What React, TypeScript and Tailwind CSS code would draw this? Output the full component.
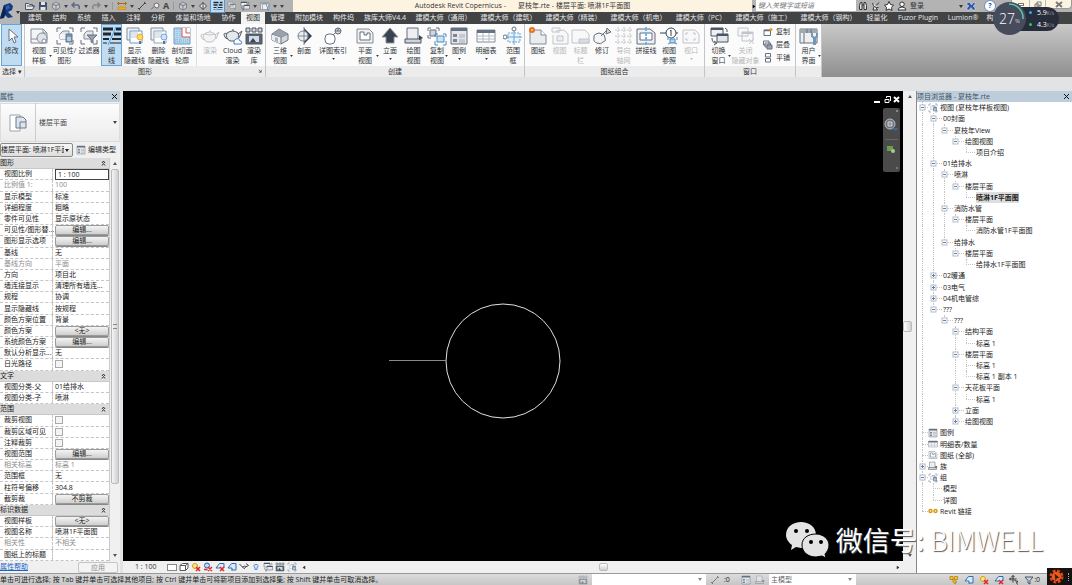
import type { ReactNode } from "react";
import { clsx } from "clsx";

const INK = "#667080";
const BLUE = "#4d8bbf";

const glyphs: Record<string, ReactNode> = {
  cursor: <path d="M7 3v12l3-3 2 5 2-1-2-5h4z" fill="#fff" stroke={INK} />,
  template: (
    <>
      <path d="M2 3h12l4 4v10H2z" fill="#f3f5f7" stroke="#858d98" />
      <path d="M2 13h8M14 3v4h4" fill="none" stroke="#858d98" />
      <circle cx="13" cy="12" r="5" fill="#dfe3e8" stroke="#858d98" />
      <circle cx="15" cy="15" r="2" fill="#fff" stroke="#858d98" />
    </>
  ),
  visibility: (
    <>
      <path d="M2 6V2h4M14 2h4v4M2 14v4h4M18 14v4h-4" fill="none" stroke={INK} />
      <path d="M5 8l3-3h6v8H5z" fill="#e5e7eb" stroke="#858d98" />
      <path d="M5 8h6v5H5z" fill="#f3f4f6" />
      <path d="M11 8h6v8h-6z" fill="#6f9cc4" stroke={INK} />
      <path d="M12 12h4M12 14h4" stroke="#fff" />
    </>
  ),
  filter: (
    <>
      <path d="M2 6V2h4M14 2h4v4M2 14v4h4M18 14v4h-4" fill="none" stroke={INK} />
      <path d="M5 8l3-3h6v8H5z" fill="#e5e7eb" stroke="#858d98" />
      <path d="M8 9h10l-4 4v4l-2-1v-3z" fill="#9ca3af" stroke={INK} />
    </>
  ),
  thin: (
    <>
      <path d="M1 3h10M14 3h5M1 8h8M12 8h7" stroke="#20262e" strokeWidth="3" />
      <path d="M1 13h6M10 13h9" stroke="#20262e" strokeWidth="2" />
      <path d="M1 17h4M8 17h11" stroke="#20262e" />
      <path d="M14 1L6 19" stroke="#3fa0e8" />
    </>
  ),
  showHidden: (
    <>
      <path d="M2 2h12v12H2z" fill="#eef2f5" stroke="#858d98" />
      <path d="M5 5h12v12H5z" fill="#fff" stroke="#6b9cc8" />
      <path d="M6 6h7v6H6z" fill="#dfe5ea" />
      <circle cx="15" cy="11" r="3" fill="#ffd75e" stroke="#e0b040" />
      <path d="M14 15h2v3h-2z" fill={INK} />
    </>
  ),
  removeHidden: (
    <>
      <path d="M2 2h12v12H2z" fill="#eef2f5" stroke="#858d98" />
      <path d="M5 5h12v12H5z" fill="#fff" stroke="#8ca8c2" />
      <path d="M6 6h7v6H6z" fill="#dfe5ea" />
      <circle cx="15" cy="11" r="3" fill="#cfe3fb" stroke="#7aa3d6" />
      <path d="M14 15h2v3h-2z" fill={INK} />
    </>
  ),
  cutProfile: (
    <>
      <path d="M2 2h16v16H2z" fill="#b9d9ef" stroke="#6a9cc0" />
      <path d="M10 2h8v9h-8z" fill="#fff" />
      <path d="M10 2v9h8M14 2v5h4" fill="none" stroke="#d9534f" />
      <path d="M3 14h14M3 16h14M5 3v14M8 3v14" stroke="#7fb2d6" strokeDasharray="1 1" />
    </>
  ),
  teapot: (
    <>
      <path d="M4 8q6-4 11 0q2 5-3 8H7q-5-3-3-8zM9 5h2M4 9Q1 7 1 10q1 4 4 4M15 9l4-3-3 7" fill="#e5e7eb" stroke="#555e6a" />
      <path d="M5 8q5 2 10 0" fill="none" stroke="#555e6a" />
    </>
  ),
  cloudTeapot: (
    <>
      <path d="M4 7q6-4 11 0q2 5-3 8H7q-5-3-3-8zM9 4h2M4 8Q1 6 1 9q1 4 4 4M15 8l4-3-3 7" fill="#e5e7eb" stroke="#555e6a" />
      <path d="M11 18h7q2-3-1-3-1-4-4-2-3 1-2 5z" fill="#fff" stroke="#3f80c8" />
    </>
  ),
  gallery: (
    <>
      <path d="M2 2h4v4H2zM8 2h4v4H8zM14 2h4v4h-4z" fill="#d1d5db" stroke="#4b5563" />
      <path d="M2 8h16v10H2z" fill="#5b6470" stroke="#4b5563" />
      <path d="M5 10h10v6H5z" fill="#cfdbe6" />
      <path d="M6 16l3-4 3 4z" fill="#39424e" />
    </>
  ),
  house: (
    <>
      <path d="M2 8l7-5 9 5v6l-7 4-9-4z" fill="#d3d7dc" stroke={INK} />
      <path d="M2 8l9 3v7l-9-4z" fill="#eceef1" />
      <path d="M2 8l9 3 7-3M11 11v7" fill="none" stroke={INK} />
      <path d="M2 8l7-5 9 5-7 3z" fill="#98a1ac" />
      <path d="M5 11l3 1v4l-3-1z" fill="#a9b1ba" />
    </>
  ),
  section: (
    <>
      <path d="M10 2l8 8-8 8z" fill="#39424e" />
      <circle cx="9" cy="10" r="5" fill="#eef1f4" stroke="#7b8490" />
      <path d="M10 1v18M4 10h10" stroke="#7b8490" />
    </>
  ),
  callout: (
    <>
      <rect x="2" y="8" width="10" height="10" rx="4" fill="#fff" stroke={INK} />
      <circle cx="15" cy="5" r="3" fill="#d1d5db" stroke={INK} />
      <path d="M10 9l3-3M12 5h6M15 2v3" stroke={INK} />
    </>
  ),
  plan: (
    <>
      <path d="M2 3h12l4 4v10H2z" fill="#eef0f3" stroke="#858d98" />
      <path d="M5 6h4v3h3V7h3v7H5z" fill="#fff" stroke={INK} />
    </>
  ),
  elevation: <path d="M10 2l8 9h-4v6H6v-6H2z" fill="#39424e" stroke="#8b939e" />,
  drafting: (
    <>
      <path d="M3 2h11v13H3z" fill="#eceef1" stroke={INK} />
      <path d="M1 13h16v4H1z" fill="#cfd4da" stroke="#4b5563" />
      <path d="M15 9l4 3-4 2z" fill="#39424e" />
    </>
  ),
  duplicate: (
    <>
      <path d="M1 5V2h3M9 2h3v3M1 9v3h3" fill="none" stroke={INK} />
      <path d="M3 4h6v6H3z" fill="#cfd4da" stroke={INK} />
      <path d="M10 10h7v6h-7z" fill="#cfe3f3" stroke={BLUE} />
      <path d="M8 11v-3h3M16 8h3v3M8 15v4h3M19 15v4h-3" fill="none" stroke={BLUE} />
    </>
  ),
  legend: (
    <>
      <path d="M2 2h16v16H2z" fill="#e5e7eb" stroke="#667080" />
      <path d="M2 2h16v3H2z" fill="#667080" />
      <path d="M4 8h4v3H4zM4 13h4v3H4z" fill="#7c8795" />
      <path d="M10 9h6M10 11h6M10 14h6M10 16h6" stroke="#a4acb6" />
    </>
  ),
  schedule: (
    <>
      <path d="M1 4h18v12H1z" fill="#fff" stroke="#858d98" />
      <path d="M1 4h18v3H1z" fill="#667080" />
      <path d="M1 10h18M1 13h18M7 7v9M13 7v9" stroke="#b4bac2" />
    </>
  ),
  scopeBox: (
    <>
      <path d="M5 7h12v9H5z" fill="#eaf4fc" stroke="#6ba3d0" strokeDasharray="2 1" />
      <path d="M11 5v14M3 11h16" stroke="#6ba3d0" />
      <circle cx="11" cy="3" r="2" fill="#fff" stroke={INK} />
      <circle cx="2" cy="11" r="2" fill="#fff" stroke={INK} />
    </>
  ),
  sheet: (
    <>
      <path d="M2 4h11l5 5v9H2z" fill="#e9ecef" stroke="#858d98" />
      <path d="M13 4v5h5" fill="#fff" stroke="#858d98" />
      <circle cx="4" cy="4" r="2" fill="#ffd75e" stroke="#ef6c1a" strokeWidth="2" />
    </>
  ),
  sheetView: (
    <>
      <path d="M2 6h8M2 6V2h8v3M6 5l8-1 4 4v10H3V9" fill="#f3f4f6" stroke="#59626e" />
      <path d="M7 10h6v5H7z" fill="#d1d5db" stroke="#59626e" />
    </>
  ),
  titleBlock: (
    <>
      <path d="M1 4h13l4 4v9H1z" fill="#f3f4f6" stroke="#59626e" />
      <path d="M8 13h10v4H8z" fill="#9ca3af" stroke="#59626e" />
    </>
  ),
  revision: (
    <>
      <path d="M4 8q-3 1-2 4-1 4 3 5 4 2 6-1 4-1 2-4 0-4-3-4-3-2-6 0z" fill="#f3f4f6" stroke={INK} />
      <path d="M9 10l6-6M15 2l4 4-5 2z" fill="#d1d5db" stroke={INK} />
    </>
  ),
  guideGrid: <path d="M4 1v18M10 1v18M16 1v18M1 4h18M1 10h18M1 16h18" stroke="#59626e" strokeDasharray="2 1" />,
  matchline: (
    <>
      <path d="M1 3h13l5 4v11H1z" fill="#eef0f3" stroke={INK} />
      <path d="M4 7h12v7H4z" fill="#fff" stroke={INK} />
      <path d="M10 1v18" stroke="#6bb5ee" strokeWidth="2" strokeDasharray="4 1" />
    </>
  ),
  viewRef: (
    <>
      <circle cx="12" cy="7" r="5" fill="#fff" stroke="#39424e" />
      <path d="M1 7h6M11 5l1-1v6M17 7h2" fill="none" stroke="#39424e" />
      <path d="M11 13h5v4h-5zM9 14v-3M18 14v-3M9 18l2-1M18 18l-2-1" fill="#b5d6ee" stroke={BLUE} />
    </>
  ),
  viewport: (
    <>
      <path d="M2 4h12l4 4v9H2z" fill="#f3f4f6" stroke="#59626e" />
      <path d="M5 9V7h2M12 7h2v2M5 12v2h2M14 12v2h-2" fill="none" stroke="#59626e" />
    </>
  ),
  switchWin: (
    <>
      <path d="M2 2h12v8H2z" fill="#eef0f3" stroke="#4b5563" />
      <path d="M2 2h12v2H2z" fill="#4b5563" />
      <path d="M8 8h11v8H8z" fill="#e3e6ea" stroke="#4b5563" />
      <path d="M8 8h11v2H8z" fill="#4b5563" />
      <path d="M3 12q0 5 4 5M5 15l3 2-3 2M16 2q3 1 2 4" fill="none" stroke="#4b5563" />
    </>
  ),
  closeHidden: (
    <>
      <path d="M2 2h10v8H2zM6 6h11v9H6z" fill="#f3f4f6" stroke="#59626e" />
      <path d="M6 7h11" stroke="#59626e" strokeWidth="2" />
      <path d="M13 13l5 5M18 13l-5 5" stroke="#59626e" />
    </>
  ),
  userUi: (
    <>
      <path d="M1 3h17v14H1z" fill="#eef0f3" stroke={INK} />
      <path d="M1 3h17v4H1z" fill="#a0a8b2" />
      <path d="M5 7v10M8 3v4M12 3v4" stroke={INK} />
      <path d="M13 7v3l2 2v7M18 7v3l-2 2v7" fill="none" stroke="#7397b5" strokeWidth="2" />
    </>
  ),
  newWin: (
    <>
      <path d="M2 6h13v11H2z" fill="#fff" stroke={INK} strokeWidth="2" />
      <path d="M2 7h13" stroke={INK} strokeWidth="3" />
      <circle cx="16" cy="5" r="3" fill="#f59e0b" />
    </>
  ),
  cascade: (
    <>
      <path d="M1 2h11v8H1zM4 6h11v8H4z" fill="#fff" stroke={INK} strokeWidth="2" />
      <path d="M8 10h10v8H8z" fill="#9ca3af" stroke={INK} strokeWidth="2" />
    </>
  ),
  tile: <path d="M5 1h10v7H5zM5 11h10v7H5z" fill="#fff" stroke={INK} strokeWidth="2" />,
  open: <path d="M1 5h6l2 2h6v3h4l-4 7H1zM4 10h15" fill="#e5e7eb" stroke="#4b5563" strokeWidth="2" />,
  save: (
    <>
      <path d="M2 2h14l2 2v14H2z" fill="#3f4f66" />
      <path d="M6 2h8v6H6zM5 12h10v6H5z" fill="#dfe5ec" />
    </>
  ),
  sync: <path d="M10 2l7 4v8l-7 4-7-4V6zM3 6l7 4 7-4M10 10v8" fill="#c8ccd2" stroke="#7c828b" strokeWidth="2" />,
  undo: <path d="M7 3L2 8l5 5M2 8h11q5 1 3 8" fill="none" stroke="#5b6b84" strokeWidth="3" />,
  redo: <path d="M13 3l5 5-5 5M18 8H7q-5 1-3 8" fill="none" stroke="#858585" strokeWidth="3" />,
  measure: (
    <>
      <path d="M1 5h18M4 2L1 5l3 3M16 2l3 3-3 3" stroke="#a86d0a" strokeWidth="2" />
      <path d="M2 12h16v5H2z" fill="#efae20" stroke="#b8800f" />
    </>
  ),
  dim: <path d="M4 16L16 4M2 14l4 4M14 2l4 4" stroke="#444" strokeWidth="2" />,
  tag: <path d="M2 17l6-6M8 9a5 5 0 1 1 4 5z" fill="#eee" stroke="#666" strokeWidth="2" />,
  diamond: <path d="M10 3l7 7-7 7-7-7zM10 3v14" fill="#e5e7eb" stroke="#444" strokeWidth="2" />,
  binoculars: <path d="M3 17V9l2-6h3v14zM17 17V9l-2-6h-3v14zM8 8h4" fill="#e5e7eb" stroke="#333" strokeWidth="2" />,
  dish: <path d="M3 4q2 10 12 9M6 11l-2 7h9l-3-5M10 9l6-6" fill="#eee" stroke="#333" strokeWidth="2" />,
  star: <path d="M10 1l3 6 6 1-4 5 1 6-6-3-6 3 1-6-4-5 6-1z" fill="#fff" stroke="#333" strokeWidth="2" />,
  person: <path d="M10 2a4 4 0 1 1 0 9 4 4 0 0 1 0-9zM2 18q1-6 8-6t8 6z" fill="#fff" stroke="#333" strokeWidth="2" />,
  exchange: <path d="M2 3h5l4 5 4-5h3v4l-4 3 4 4v4h-4l-4-5-4 5H2v-4l4-4-4-3z" fill="#2b55a8" stroke="#d6e2f7" />,
  links: (
    <>
      <circle cx="5" cy="10" r="3" fill="none" stroke="#d79c17" strokeWidth="3" />
      <circle cx="15" cy="10" r="3" fill="none" stroke="#d79c17" strokeWidth="3" />
    </>
  ),
  funnel: <path d="M2 4h16l-6 7v7l-4-2v-5z" fill="#cbd5e1" stroke="#475569" strokeWidth="2" />,
  box: <path d="M2 7l5-4h11v9l-5 5H2zM2 7h11v10M13 7l5-4" fill="#fff" stroke="#555" strokeWidth="2" />,
  sunOff: (
    <>
      <circle cx="8" cy="8" r="5" fill="#fde68a" stroke="#d99a0b" strokeWidth="2" />
      <path d="M10 10l8 8M18 10l-8 8" stroke="#dc2626" strokeWidth="3" />
    </>
  ),
  shadowOff: (
    <>
      <circle cx="8" cy="7" r="5" fill="#bfdbfe" stroke="#2563ab" strokeWidth="2" />
      <path d="M2 15h7M10 10l8 8M18 10l-8 8" stroke="#dc2626" strokeWidth="3" />
    </>
  ),
  crop: <path d="M2 12l7-9h9v13H9M2 12h8v5" fill="#dbeafe" stroke="#2f6fb0" strokeWidth="2" />,
  cropOff: (
    <>
      <path d="M2 12l7-9h9v9M2 12h8" fill="#dbeafe" stroke="#2f6fb0" strokeWidth="2" />
      <path d="M10 10l8 8M18 10l-8 8" stroke="#dc2626" strokeWidth="3" />
    </>
  ),
  glasses: <path d="M1 4l6 6M7 10q3 6 6 1t-6-1M13 10l6-3-5-4" fill="none" stroke="#444" strokeWidth="2" />,
  bulb: <path d="M10 5a3 3 0 0 1 2 6v4H8v-4a3 3 0 0 1 2-6z" fill="#dbeafe" stroke="#4a8fd0" strokeWidth="2" />,
  move: <path d="M8 1v14M1 8h14M5 4l3-3 3 3M4 5L1 8l3 3M11 11l7 2-3 2 2 4" fill="none" stroke="#333" strokeWidth="2" />,
  selectLink: <path d="M2 3h6v6H2zM11 3h6v6h-6zM8 8l8 6-4 1 1 3-5-4z" fill="#f6c445" stroke="#c08d16" strokeWidth="2" />,
};

function Icon({ name, className = "size-[10px]" }: { name: string; className?: string }) {
  return (
    <svg viewBox="0 0 20 20" className={clsx("shrink-0", className)} fill="none" aria-hidden="true">
      {glyphs[name]}
    </svg>
  );
}

function Caret({ className = "h-[3px] w-1" }: { className?: string }) {
  return (
    <svg viewBox="0 0 4 3" className={clsx("shrink-0", className)} aria-hidden="true">
      <path d="M0 0h4L2 3z" fill="currentColor" />
    </svg>
  );
}

type Tool = {
  icon: string;
  label: string[];
  w: string;
  menu?: "side" | "below";
  off?: boolean;
  on?: boolean;
};

const graphicsTools: Tool[] = [
  { icon: "template", label: ["视图", "样板"], w: "w-[26px]", menu: "side" },
  { icon: "visibility", label: ["可见性/", "图形"], w: "w-[25px]" },
  { icon: "filter", label: ["过滤器"], w: "w-[24px]" },
  { icon: "thin", label: ["细", "线"], w: "w-[21px]", on: true },
  { icon: "showHidden", label: ["显示", "隐藏线"], w: "w-[25px]" },
  { icon: "removeHidden", label: ["删除", "隐藏线"], w: "w-[23px]" },
  { icon: "cutProfile", label: ["剖切面", "轮廓"], w: "w-[24px]" },
];

const renderTools: Tool[] = [
  { icon: "teapot", label: ["渲染"], w: "w-[24px]", off: true },
  { icon: "cloudTeapot", label: ["Cloud", "渲染"], w: "w-[21px]" },
  { icon: "gallery", label: ["渲染", "库"], w: "w-[22px]" },
];

const createTools: Tool[] = [
  { icon: "house", label: ["三维", "视图"], w: "w-[26px]", menu: "side" },
  { icon: "section", label: ["剖面"], w: "w-[22px]" },
  { icon: "callout", label: ["详图索引"], w: "w-[36px]", menu: "below" },
  { icon: "plan", label: ["平面", "视图"], w: "w-[28px]", menu: "side" },
  { icon: "elevation", label: ["立面"], w: "w-[22px]", menu: "below" },
  { icon: "drafting", label: ["绘图", "视图"], w: "w-[25px]" },
  { icon: "duplicate", label: ["复制", "视图"], w: "w-[22px]", menu: "side" },
  { icon: "legend", label: ["图例"], w: "w-[22px]", menu: "below" },
  { icon: "schedule", label: ["明细表"], w: "w-[32px]", menu: "below" },
  { icon: "scopeBox", label: ["范围", "框"], w: "w-[22px]" },
];

const sheetTools: Tool[] = [
  { icon: "sheet", label: ["图纸"], w: "w-[22px]" },
  { icon: "sheetView", label: ["视图"], w: "w-[21px]", off: true },
  { icon: "titleBlock", label: ["标题", "栏"], w: "w-[21px]", off: true },
  { icon: "revision", label: ["修订"], w: "w-[22px]" },
  { icon: "guideGrid", label: ["导向", "轴网"], w: "w-[21px]", off: true },
  { icon: "matchline", label: ["拼接线"], w: "w-[24px]" },
  { icon: "viewRef", label: ["视图", "参照"], w: "w-[22px]" },
  { icon: "viewport", label: ["视口"], w: "w-[22px]", off: true, menu: "below" },
];

const windowTools: Tool[] = [
  { icon: "switchWin", label: ["切换", "窗口"], w: "w-[25px]", menu: "side" },
  { icon: "closeHidden", label: ["关闭", "隐藏对象"], w: "w-[29px]", off: true },
];

function ToolButton({ tool }: { tool: Tool }) {
  return (
    <button
      type="button"
      disabled={tool.off}
      className={clsx(
        "relative flex h-full shrink-0 flex-col items-center pt-0.5 text-[#2f3338]",
        tool.w,
        tool.off && "opacity-35",
        tool.on && "bg-[#bfdcf3] shadow-[inset_0_0_0_1px_#6ba3d3]",
      )}
    >
      <Icon name={tool.icon} className="size-5" />
      {tool.label.map((line) => (
        <span key={line} className="whitespace-nowrap leading-[10px]">
          {line}
        </span>
      ))}
      {tool.menu === "below" && <Caret className="mt-[2px] h-[2px] w-[3px]" />}
      {tool.menu === "side" && <Caret className="absolute right-0 top-[31px] h-[2px] w-[3px]" />}
    </button>
  );
}

function RibbonPanel({ title, children, launcher }: { title: string; children: ReactNode; launcher?: boolean }) {
  return (
    <section className="flex shrink-0 flex-col border-r border-[#c3c5c8] bg-[#fbfbfb]">
      <div className="flex h-[42px]">{children}</div>
      <h2 className="relative h-[11px] bg-[#ececed] text-center leading-[11px] text-[#333]">
        {title}
        {launcher && (
          <svg viewBox="0 0 5 5" className="absolute bottom-1 right-[3px] size-1" fill="none" stroke="#555" aria-hidden="true">
            <path d="M1 1l3 3M4 1v3H1" />
          </svg>
        )}
      </h2>
    </section>
  );
}

const tabs = [
  ["建筑", "w-[24px]"],
  ["结构", "w-[25px]"],
  ["系统", "w-[24px]"],
  ["插入", "w-[25px]"],
  ["注释", "w-[25px]"],
  ["分析", "w-[24px]"],
  ["体量和场地", "w-[46px]"],
  ["协作", "w-[25px]"],
  ["视图", "w-[24px]"],
  ["管理", "w-[25px]"],
  ["附加模块", "w-[38px]"],
  ["构件坞", "w-[31px]"],
  ["族库大师V4.4", "w-[52px]"],
  ["建模大师（通用）", "w-[65px]"],
  ["建模大师（建筑）", "w-[65px]"],
  ["建模大师（精装）", "w-[65px]"],
  ["建模大师（机电）", "w-[65px]"],
  ["建模大师（PC）", "w-[60px]"],
  ["建模大师（施工）", "w-[65px]"],
  ["建模大师（钢构）", "w-[65px]"],
  ["轻量化", "w-[32px]"],
  ["Fuzor Plugin", "w-[50px]"],
  ["Lumion®", "w-[40px]"],
  ["构", "w-[14px]"],
];

function QuickAccess() {
  return (
    <div className="flex w-[273px] shrink-0 items-center gap-[3px] pl-[5px] text-[#444]">
      <Icon name="open" />
      <Icon name="save" />
      <Icon name="sync" />
      <Caret />
      <Icon name="undo" />
      <Caret />
      <Icon name="redo" />
      <Caret />
      <span className="mx-px h-2 w-px bg-[#999]" />
      <Icon name="measure" />
      <Caret />
      <Icon name="dim" />
      <Icon name="tag" />
      <span className="font-['Open_Sans',sans-serif] text-[9px] font-bold leading-3">A</span>
      <span className="mx-px h-2 w-px bg-[#999]" />
      <Icon name="sync" />
      <Caret />
      <Icon name="diamond" />
      <span className="flex h-3 w-[13px] items-center justify-center bg-[#bfdcf3] ring-1 ring-[#5b97cb]">
        <Icon name="thin" />
      </span>
      <Icon name="closeHidden" className="size-[10px] opacity-60" />
      <Icon name="switchWin" />
      <Caret />
      <Icon name="userUi" />
      <Caret />
      <Caret />
    </div>
  );
}

function Header() {
  return (
    <header className="flex h-6 shrink-0 bg-[#424345]">
      <button type="button" aria-label="R" className="flex w-5 shrink-0 items-center bg-[#b5b6b8] text-[#333]">
        <svg viewBox="0 0 16 20" className="h-5 w-4" aria-hidden="true">
          <path d="M4 3l6-2 3 3-1 4-4 2 5 5-5 1-4-4-2 4H0z" fill="#173a7c" />
          <path d="M6 4l3-1 1 3-4 2z" fill="#2f5cae" />
          <path d="M0 17L4 3l2 8-2 5z" fill="#0c2453" />
        </svg>
        <Caret />
      </button>
      <div className="flex min-w-0 flex-1 flex-col">
        <div className="flex h-3 bg-[#b3b3b4]">
          <QuickAccess />
          <h1 className="flex min-w-0 flex-1 items-center justify-center gap-3 whitespace-nowrap bg-[#fdf3e1] leading-3 text-[#333]">
            <span>Autodesk Revit Copernicus -</span>
            <span>夏枝年.rte - 楼层平面: 喷淋1F平面图</span>
          </h1>
          <span className="flex w-1 items-center justify-center">
            <Caret className="h-[3px] w-1 -rotate-90" />
          </span>
          <input
            aria-label="搜索"
            placeholder="键入关键字或短语"
            className="h-[11px] w-[100px] bg-white px-0.5 italic leading-[11px] outline-none placeholder:text-[#777]"
          />
          <div className="flex w-[216px] shrink-0 items-center gap-[3px] pl-0.5 text-[#333]">
            <Icon name="binoculars" />
            <Icon name="dish" />
            <Icon name="star" />
            <Icon name="person" />
            <span>登录</span>
            <Caret className="ml-8 h-[3px] w-1" />
            <Icon name="exchange" />
            <span className="ml-1.5 flex size-[10px] items-center justify-center rounded-full bg-white font-bold text-[#24569f] ring-1 ring-[#7393c4]">
              ?
            </span>
            <div className="ml-auto flex h-[9px] self-start rounded-b border border-t-0 border-[#9a9a9a] bg-[#fdf3e1] text-[#666]">
              <button type="button" aria-label="最小化" className="flex w-[17px] items-center justify-center">
                <span className="h-[3px] w-1.5 border border-[#777] bg-white" />
              </button>
              <button type="button" aria-label="还原" className="flex w-[17px] items-center justify-center border-x border-[#bbb]">
                <svg viewBox="0 0 8 7" className="h-[7px] w-2" fill="#fff" stroke="#777" aria-hidden="true">
                  <path d="M3 1h4v4H3zM1 3h4v3H1z" />
                </svg>
              </button>
              <button type="button" aria-label="关闭" className="flex w-[25px] items-center justify-center">
                <svg viewBox="0 0 8 7" className="h-[7px] w-2" stroke="#777" strokeWidth="2" aria-hidden="true">
                  <path d="M1 1l6 5M7 1L1 6" />
                </svg>
              </button>
            </div>
          </div>
        </div>
        <nav className="flex h-3 overflow-hidden pl-[3px] text-[#e8e8e8]">
          {tabs.map(([name, width]) => (
            <button
              key={name}
              type="button"
              className={clsx(
                "shrink-0 whitespace-nowrap text-center leading-3",
                width,
                name === "视图" && "bg-[#f3f3f3] text-[#222]",
              )}
            >
              {name}
            </button>
          ))}
        </nav>
      </div>
    </header>
  );
}

function Ribbon() {
  return (
    <div className="flex h-[53px] shrink-0 overflow-hidden bg-linear-to-b from-[#c9c9c9] to-[#8f8f8f]">
      <RibbonPanel title="选择 ▾">
        <div className="w-[24px] px-px">
          <ToolButton tool={{ icon: "cursor", label: ["修改"], w: "w-[21px]", on: true }} />
        </div>
      </RibbonPanel>
      <RibbonPanel title="图形" launcher>
        <div className="flex pl-px">
          {graphicsTools.map((t) => (
            <ToolButton key={t.icon} tool={t} />
          ))}
        </div>
        <div className="ml-[2px] flex border-l border-[#ddd] pl-px">
          {renderTools.map((t) => (
            <ToolButton key={t.icon} tool={t} />
          ))}
        </div>
      </RibbonPanel>
      <RibbonPanel title="创建">
        <div className="flex pl-px">
          {createTools.map((t) => (
            <ToolButton key={t.icon} tool={t} />
          ))}
        </div>
      </RibbonPanel>
      <RibbonPanel title="图纸组合">
        <div className="flex pl-[2px] pr-0.5">
          {sheetTools.map((t) => (
            <ToolButton key={t.icon} tool={t} />
          ))}
        </div>
      </RibbonPanel>
      <RibbonPanel title="窗口">
        <div className="flex pl-px">
          {windowTools.map((t) => (
            <ToolButton key={t.icon} tool={t} />
          ))}
        </div>
        <div className="flex w-[35px] flex-col justify-around py-0.5 pl-[3px]">
          {[
            ["newWin", "复制"],
            ["cascade", "层叠"],
            ["tile", "平铺"],
          ].map(([icon, name]) => (
            <button key={name} type="button" className="flex items-center gap-[3px] leading-[10px] text-[#2f3338]">
              <Icon name={icon} />
              {name}
            </button>
          ))}
        </div>
      </RibbonPanel>
      <RibbonPanel title={"\u00a0"}>
        <ToolButton tool={{ icon: "userUi", label: ["用户", "界面"], w: "w-[25px]", menu: "side" }} />
      </RibbonPanel>
    </div>
  );
}

type Prop = { name: string; value?: string; kind?: "group" | "button" | "check" | "input"; dim?: boolean };

const props: Prop[] = [
  { name: "图形", kind: "group" },
  { name: "视图比例", value: "1 : 100", kind: "input" },
  { name: "比例值 1:", value: "100", dim: true },
  { name: "显示模型", value: "标准" },
  { name: "详细程度", value: "粗略" },
  { name: "零件可见性", value: "显示原状态" },
  { name: "可见性/图形替...", value: "编辑...", kind: "button" },
  { name: "图形显示选项", value: "编辑...", kind: "button" },
  { name: "基线", value: "无" },
  { name: "基线方向", value: "平面", dim: true },
  { name: "方向", value: "项目北" },
  { name: "墙连接显示", value: "清理所有墙连..." },
  { name: "规程", value: "协调" },
  { name: "显示隐藏线", value: "按规程" },
  { name: "颜色方案位置", value: "背景" },
  { name: "颜色方案", value: "<无>", kind: "button" },
  { name: "系统颜色方案", value: "编辑...", kind: "button" },
  { name: "默认分析显示...", value: "无" },
  { name: "日光路径", kind: "check" },
  { name: "文字", kind: "group" },
  { name: "视图分类-父", value: "01给排水" },
  { name: "视图分类-子", value: "喷淋" },
  { name: "范围", kind: "group" },
  { name: "裁剪视图", kind: "check" },
  { name: "裁剪区域可见", kind: "check" },
  { name: "注释裁剪", kind: "check" },
  { name: "视图范围", value: "编辑...", kind: "button" },
  { name: "相关标高", value: "标高 1", dim: true },
  { name: "范围框", value: "无" },
  { name: "柱符号偏移", value: "304.8" },
  { name: "截剪裁", value: "不剪裁", kind: "button" },
  { name: "标识数据", kind: "group" },
  { name: "视图样板", value: "<无>", kind: "button" },
  { name: "视图名称", value: "喷淋1F平面图" },
  { name: "相关性", value: "不相关", dim: true },
  { name: "图纸上的标题", value: "" },
];

function PropRow({ item }: { item: Prop }) {
  if (item.kind === "group") {
    return (
      <tr className="flex min-h-0 flex-1 items-center border-b border-[#c8c8c8] bg-[#dcdcdc] text-[#222]">
        <th colSpan={2} className="flex flex-1 items-center justify-between pr-[3px] font-normal">
          {item.name}
          <svg viewBox="0 0 5 6" className="h-1.5 w-[5px]" fill="none" stroke="#333" aria-hidden="true">
            <path d="M1 3l1.5-2L4 3M1 5.5l1.5-2 1.5 2" />
          </svg>
        </th>
      </tr>
    );
  }
  return (
    <tr className={clsx("flex min-h-0 flex-1 border-b border-dashed border-[#c4c4c4]", item.dim ? "text-[#8c8c8c]" : "text-[#222]")}>
      <th className="flex w-[53px] shrink-0 items-center whitespace-nowrap border-r border-dashed border-[#c4c4c4] pl-[4px] text-left font-normal">
        {item.name}
      </th>
      <td className="flex min-w-0 flex-1 items-center whitespace-nowrap pl-[2px]">
        {item.kind === "button" && (
          <button type="button" className="h-[10px] w-full rounded-xs border border-[#9a9a9a] bg-linear-to-b from-[#f4f4f4] to-[#cfcfcf] leading-[8px] shadow-[0_1px_0_#888]">
            {item.value}
          </button>
        )}
        {item.kind === "check" && (
          <input type="checkbox" aria-label={item.name} className="size-2 appearance-none border border-[#aaa] bg-[#f4f4f4]" />
        )}
        {item.kind === "input" && (
          <input aria-label={item.name} defaultValue={item.value} className="h-[11px] w-full border border-[#444] bg-white px-[2px] outline-none" />
        )}
        {!item.kind && item.value}
      </td>
    </tr>
  );
}

function PanelTitle({ children }: { children: ReactNode }) {
  return (
    <div className="flex h-[11px] shrink-0 items-center justify-between bg-[#bdcddc] pr-[3px] text-[#42505e]">
      <h2>{children}</h2>
      <button type="button" aria-label="关闭">
        <svg viewBox="0 0 5 5" className="size-[5px]" stroke="#111" aria-hidden="true">
          <path d="M0 0l5 5M5 0L0 5" />
        </svg>
      </button>
    </div>
  );
}

function Properties() {
  return (
    <aside className="flex w-[120px] shrink-0 flex-col bg-[#f0f0f0]">
      <PanelTitle>属性</PanelTitle>
      <div className="mt-px flex h-[39px] shrink-0 items-center bg-linear-to-b from-[#fdfdfd] to-[#ebebeb] pr-[3px] text-[#444] shadow-[inset_0_0_0_1px_#ddd]">
        <span className="flex h-full w-9 items-center justify-center border-r border-[#ccc]">
          <svg viewBox="0 0 20 20" className="size-5" aria-hidden="true">
            <path d="M2 2h10v16H2z" fill="#fff" stroke="#9aa4ae" />
            <path d="M8 4h7l3 3v8H8z" fill="#dde5ec" stroke="#69798a" />
            <path d="M12 15V9h6" fill="none" stroke="#69798a" />
          </svg>
        </span>
        <span className="ml-[3px] flex-1">楼层平面</span>
        <Caret />
      </div>
      <div className="flex h-4 shrink-0 items-center gap-[3px] text-[#222]">
        <div className="relative flex h-[14px] w-[73px] items-center">
          <select aria-label="楼层平面" className="h-full w-full appearance-none overflow-hidden rounded-xs border border-[#888] bg-linear-to-b from-[#f6f6f6] to-[#dedede] pr-2">
            <option>楼层平面: 喷淋1F平面图</option>
          </select>
          <Caret className="absolute right-1 h-[3px] w-1" />
        </div>
        <button type="button" className="flex items-center gap-[2px] whitespace-nowrap">
          <Icon name="legend" />
          编辑类型
        </button>
      </div>
      <div className="flex min-h-0 flex-1">
        <table className="flex min-w-0 flex-1 flex-col border-r border-[#ccc] bg-white">
          <tbody className="flex min-h-0 flex-1 flex-col">
            {props.map((p) => (
              <PropRow key={p.name} item={p} />
            ))}
          </tbody>
        </table>
        <div className="flex w-[10px] flex-col items-center text-[#555]">
          <Caret className="my-1 h-[3px] w-1 rotate-180" />
          <div className="flex w-2 flex-[316] items-center justify-center rounded-xs border border-[#bbb] bg-linear-to-r from-[#f5f5f5] to-[#cfcfd2]">
            <span className="h-[5px] w-1 border-y border-[#888]" />
          </div>
          <div className="flex-[67]" />
          <Caret className="my-1 h-[3px] w-1" />
        </div>
      </div>
      <div className="flex h-3 shrink-0 items-center justify-between pr-0.5">
        <a href="#help" className="text-[#1464c8] underline">
          属性帮助
        </a>
        <button type="button" disabled className="h-[11px] w-10 rounded-xs border border-[#c5c5c5] bg-[#f4f4f4] leading-[9px] text-[#8c8c8c]">
          应用
        </button>
      </div>
    </aside>
  );
}

const viewControls = ["box", "sunOff", "shadowOff", "cropOff", "crop", "glasses", "bulb", "switchWin", "gallery", "visibility"];

function Viewport() {
  return (
    <main className="flex min-w-0 flex-1 flex-col">
      <div className="flex min-h-0 flex-1">
        <div className="relative min-w-0 flex-1 bg-black">
          <svg viewBox="0 0 780 470" className="size-full" fill="none" stroke="#e0e0e0" aria-hidden="true">
            <circle cx="380" cy="270" r="57" />
            <path d="M266 269.5h57" stroke="#8a8a8a" />
          </svg>
          <svg viewBox="0 0 26 7" className="absolute right-[3px] top-[5px] h-[7px] w-[26px]" fill="none" stroke="#fff" strokeWidth="2" aria-hidden="true">
            <path d="M0 6h6M20 1l5 5M25 1l-5 5" />
            <path d="M11 3.500h4v3h-4zM12.500 2V.500H16.500V5" strokeWidth="1" />
          </svg>
          <svg viewBox="0 0 17 64" className="absolute right-[3px] top-[17px] h-16 w-[17px] rounded-xs bg-[#4a4a4a]" fill="none" aria-hidden="true">
            <path d="M13 2l2 2M15 2l-2 2" stroke="#888" />
            <path d="M2 31.5h13" stroke="#666" />
            <circle cx="14" cy="60" r="1" fill="#888" />
            <circle cx="7" cy="16" r="5" fill="#6d7378" stroke="#b7bdc3" />
            <path d="M5 14h4v4H5z" fill="#8a929a" stroke="#d2d6da" />
            <path d="M10 20q3 3 4 0" stroke="#3f6c9c" strokeWidth="2" />
            <path d="M4 38h6v5H4z" fill="#6f9c4d" />
            <circle cx="10" cy="43" r="2" fill="#a9c98c" />
          </svg>
        </div>
        <div className="flex w-[13px] flex-col items-center bg-[#f0f0f0] text-[#555]">
          <Caret className="my-1 h-[3px] w-1 rotate-180" />
          <div className="flex-[219]" />
          <div className="h-[11px] w-[9px] self-start rounded-xs border border-[#bbb] bg-linear-to-r from-white to-[#d0d0d0]" />
          <div className="flex-[219]" />
          <Caret className="my-1 h-[3px] w-1" />
        </div>
      </div>
      <div className="flex h-3 shrink-0 items-center bg-[#f0f0f0] text-[#333]">
        <span className="w-11 pl-3">1 : 100</span>
        <div className="flex items-center gap-[2px]">
          <span className="h-[7px] w-[10px] border border-[#888] bg-white" />
          {viewControls.map((name) => (
            <Icon key={name} name={name} />
          ))}
          <Caret className="ml-[3px] h-[3px] w-1 rotate-90" />
        </div>
        <div className="flex-[291]" />
        <div className="h-2 w-[9px] rounded-xs border border-[#bbb] bg-linear-to-b from-white to-[#d0d0d0]" />
        <div className="flex-[286]" />
        <Caret className="mr-4 h-[3px] w-1 -rotate-90" />
      </div>
    </main>
  );
}

type Node = { d: number; name: string; open?: boolean; icon?: string; bold?: boolean };

// `open` is left out for rows that have no expander
const nodes: Node[] = [
  { d: 0, name: "视图 (夏枝年样板视图)", open: true, icon: "visibility" },
  { d: 1, name: "00封面", open: true },
  { d: 2, name: "夏枝年View", open: true },
  { d: 3, name: "绘图视图", open: true },
  { d: 4, name: "项目介绍" },
  { d: 1, name: "01给排水", open: true },
  { d: 2, name: "喷淋", open: true },
  { d: 3, name: "楼层平面", open: true },
  { d: 4, name: "喷淋1F平面图", bold: true },
  { d: 2, name: "消防水管", open: true },
  { d: 3, name: "楼层平面", open: true },
  { d: 4, name: "消防水管1F平面图" },
  { d: 2, name: "给排水", open: true },
  { d: 3, name: "楼层平面", open: true },
  { d: 4, name: "给排水1F平面图" },
  { d: 1, name: "02暖通", open: false },
  { d: 1, name: "03电气", open: false },
  { d: 1, name: "04机电管综", open: false },
  { d: 1, name: "???", open: true },
  { d: 2, name: "???", open: true },
  { d: 3, name: "结构平面", open: true },
  { d: 4, name: "标高 1" },
  { d: 3, name: "楼层平面", open: true },
  { d: 4, name: "标高 1" },
  { d: 4, name: "标高 1 副本 1" },
  { d: 3, name: "天花板平面", open: true },
  { d: 4, name: "标高 1" },
  { d: 3, name: "立面", open: false },
  { d: 3, name: "绘图视图", open: false },
  { d: 0, name: "图例", icon: "legend" },
  { d: 0, name: "明细表/数量", icon: "schedule" },
  { d: 0, name: "图纸 (全部)", icon: "plan" },
  { d: 0, name: "族", open: false, icon: "drafting" },
  { d: 0, name: "组", open: true, icon: "visibility" },
  { d: 1, name: "模型" },
  { d: 1, name: "详图" },
  { d: 0, name: "Revit 链接", icon: "links" },
];

function continues(index: number, depth: number) {
  for (const n of nodes.slice(index + 1)) {
    if (n.d < depth) return false;
    if (n.d === depth) return true;
  }
  return false;
}

function TreeRow({ node, index }: { node: Node; index: number }) {
  return (
    <li className="flex min-h-0 items-center whitespace-nowrap">
      {Array.from({ length: node.d }, (_, i) => (
        <span key={i} className="flex h-full w-[11px] shrink-0 justify-center">
          {continues(index, i) && <span className="border-l border-dotted border-[#c4c4c4]" />}
        </span>
      ))}
      <span className="relative flex h-full w-[11px] shrink-0 items-center justify-center">
        <span
          className={clsx(
            "absolute left-[5px] top-0 border-l border-dotted border-[#c4c4c4]",
            continues(index, node.d) ? "h-full" : "h-1/2",
          )}
        />
        <span className={clsx("absolute left-[5px] border-t border-dotted border-[#c4c4c4]", node.icon ? "w-1.5" : "w-[9px]")} />
        {node.open !== undefined && (
          <button type="button" aria-label={node.name} className="relative">
            <svg viewBox="0 0 7 7" className="size-[7px]" aria-hidden="true">
              <rect x="1" y="1" width="5" height="5" fill="#fff" stroke="#b4bac2" />
              <path d={node.open ? "M2 3.5h3" : "M2 3.5h3M3.5 2v3"} stroke="#5b7fc0" />
            </svg>
          </button>
        )}
      </span>
      {node.icon && <Icon name={node.icon} className="mr-[2px] size-[10px]" />}
      <span className={clsx("leading-[11px]", !node.icon && "ml-[4px]", node.bold && "bg-[#dedede] font-bold")}>{node.name}</span>
    </li>
  );
}

function Browser() {
  return (
    <aside className="flex w-[156px] shrink-0 flex-col border-l border-[#888] bg-white text-[#222]">
      <PanelTitle>项目浏览器 - 夏枝年.rte</PanelTitle>
      <ul className="grid min-h-0 flex-1 grid-rows-[repeat(42,minmax(0,1fr))]">
        {nodes.map((n, i) => (
          <TreeRow key={i} node={n} index={i} />
        ))}
      </ul>
    </aside>
  );
}

function StatusBar() {
  return (
    <footer className="flex h-3 shrink-0 items-center border-t border-[#999] bg-linear-to-b from-[#dcdcdc] to-[#c6c6c6] text-[#222]">
      <p className="min-w-0 flex-1 overflow-hidden whitespace-nowrap leading-[11px]">
        单击可进行选择; 按 Tab 键并单击可选择其他项目; 按 Ctrl 键并单击可将新项目添加到选择集; 按 Shift 键并单击可取消选择。
      </p>
      <Icon name="gallery" className="size-[10px] opacity-50" />
      <div className="relative ml-1 flex w-[114px] items-center">
        <select aria-label="工作集" className="h-[11px] w-full appearance-none bg-white" />
        <Caret className="absolute right-1 h-[3px] w-1 text-[#888]" />
      </div>
      <div className="flex w-[63px] items-center gap-1 pl-1">
        <Icon name="dim" className="size-[10px] opacity-60" />
        <span>:0</span>
        <Icon name="legend" className="ml-auto size-[10px]" />
        <Icon name="drafting" className="mr-1 size-[10px] opacity-60" />
      </div>
      <div className="relative flex w-[87px] items-center">
        <select aria-label="设计选项" className="h-[11px] w-full appearance-none bg-white pl-0.5 text-[#666]">
          <option>主模型</option>
        </select>
        <Caret className="absolute right-1 h-[3px] w-1 text-[#888]" />
      </div>
      <div className="flex w-[191px] items-center justify-end gap-[5px] pr-[7px]">
        <Icon name="selectLink" />
        <Icon name="crop" />
        <Icon name="sunOff" />
        <Icon name="cropOff" />
        <Icon name="move" />
        <span className="flex items-center">
          <Icon name="funnel" />
          :0
        </span>
      </div>
      <div className="flex h-[17px] w-[25px] shrink-0 items-center gap-1 self-end bg-[#151312] pl-[2px]">
        <svg viewBox="0 0 16 16" className="size-[15px]" aria-hidden="true">
          <circle cx="8" cy="8" r="6" fill="none" stroke="#e8430f" strokeWidth="3" strokeDasharray="3 1.7" />
          <circle cx="8" cy="8" r="5" fill="#f05a18" />
          <path d="M6 5l5 4-3 1-1 3z" fill="#222" />
        </svg>
        <span className="w-px border-l border-dotted border-[#aaa] py-1" />
      </div>
    </footer>
  );
}

function SpeedMonitor() {
  return (
    <div className="absolute right-[13px] top-0.5 flex h-[33px] w-[66px] items-center text-white">
      <div className="absolute right-0 flex h-6 w-[50px] flex-col justify-center rounded-full bg-[#282d3b] pl-[20px] leading-[11px]">
        <span className="flex items-center gap-[5px]">
          <span className="size-[3px] rounded-full bg-[#38a5ed]" />
          <span>
            5.9<small className="text-[5px] text-[#9aa0ad]">K/s</small>
          </span>
        </span>
        <span className="flex items-center gap-[5px]">
          <span className="size-[3px] rounded-full bg-[#31c943]" />
          <span>
            4.3<small className="text-[5px] text-[#9aa0ad]">K/s</small>
          </span>
        </span>
      </div>
      <div className="relative flex size-[33px] items-center justify-center rounded-full bg-[#464c5c] font-['Open_Sans',sans-serif] text-[14px] font-light">
        <svg viewBox="0 0 33 33" className="absolute inset-0" fill="none" aria-hidden="true">
          <path d="M16 2a14 14 0 0 1 14 15" stroke="#56c9b4" strokeWidth="1.5" />
        </svg>
        27<span className="mt-1 text-[6px]">%</span>
      </div>
    </div>
  );
}

function Watermark() {
  return (
    <div className="pointer-events-none absolute bottom-[26px] right-[29px] flex items-center gap-[6px]">
      <svg viewBox="0 0 44 38" className="h-[38px] w-11" aria-hidden="true">
        <path d="M15 1c8 0 15 5 15 13 0 7-6 13-15 13l-5-1-5 3 1-5c-3-2-6-6-6-10C0 6 7 1 15 1z" fill="#e4e4e4" />
        <path d="M30 13c7 0 13 5 13 11 0 4-2 7-4 9l1 4-4-2-6 1c-8 0-14-5-14-12s6-11 14-11z" fill="#e4e4e4" stroke="#000" />
        <circle cx="10" cy="10" r="2" />
        <circle cx="21" cy="10" r="2" />
        <circle cx="25" cy="21" r="2" />
        <circle cx="35" cy="21" r="2" />
      </svg>
      <span className="whitespace-nowrap font-['Noto_Sans_CJK_SC',sans-serif] text-[27px] leading-9 text-white [text-shadow:1px_1px_1px_#555]">
        微信号: <span className="font-light">BIMWELL</span>
      </span>
    </div>
  );
}

export default function App() {
  return (
    <div className="relative flex h-screen flex-col overflow-hidden bg-[#e2e3e5] font-['Open_Sans','Noto_Sans_CJK_SC',sans-serif] text-[7px] leading-[10px]">
      <Header />
      <Ribbon />
      <div className="mt-[14px] flex min-h-0 flex-1 gap-[3px]">
        <Properties />
        <div className="flex min-w-0 flex-1">
          <Viewport />
          <Browser />
        </div>
      </div>
      <StatusBar />
      <SpeedMonitor />
      <Watermark />
    </div>
  );
}
